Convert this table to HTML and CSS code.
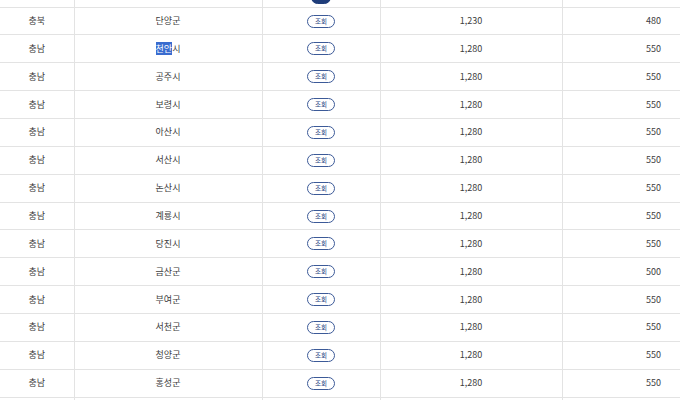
FILE: index.html
```html
<!DOCTYPE html>
<html lang="ko">
<head>
    <meta charset="UTF-8">
    <title>지역별 요금</title>
    <link rel="stylesheet" href="styles.css">
</head>
<body>
<div class="wrap">
    <table class="list">
        <colgroup>
            <col class="c1"><col class="c2"><col class="c3"><col class="c4"><col class="c5">
        </colgroup>
        <tbody>
        <tr class="prev">
            <td></td><td></td><td class="bt"><span class="btn on"></span></td><td></td><td class="r"></td>
        </tr>
        <tr><td>충북</td><td>단양군</td><td><span class="btn">조회</span></td><td>1,230</td><td class="r">480</td></tr>
        <tr><td>충남</td><td><span class="sel">천안</span>시</td><td><span class="btn">조회</span></td><td>1,280</td><td class="r">550</td></tr>
        <tr><td>충남</td><td>공주시</td><td><span class="btn">조회</span></td><td>1,280</td><td class="r">550</td></tr>
        <tr><td>충남</td><td>보령시</td><td><span class="btn">조회</span></td><td>1,280</td><td class="r">550</td></tr>
        <tr><td>충남</td><td>아산시</td><td><span class="btn">조회</span></td><td>1,280</td><td class="r">550</td></tr>
        <tr><td>충남</td><td>서산시</td><td><span class="btn">조회</span></td><td>1,280</td><td class="r">550</td></tr>
        <tr><td>충남</td><td>논산시</td><td><span class="btn">조회</span></td><td>1,280</td><td class="r">550</td></tr>
        <tr><td>충남</td><td>계룡시</td><td><span class="btn">조회</span></td><td>1,280</td><td class="r">550</td></tr>
        <tr><td>충남</td><td>당진시</td><td><span class="btn">조회</span></td><td>1,280</td><td class="r">550</td></tr>
        <tr><td>충남</td><td>금산군</td><td><span class="btn">조회</span></td><td>1,280</td><td class="r">500</td></tr>
        <tr><td>충남</td><td>부여군</td><td><span class="btn">조회</span></td><td>1,280</td><td class="r">550</td></tr>
        <tr><td>충남</td><td>서천군</td><td><span class="btn">조회</span></td><td>1,280</td><td class="r">550</td></tr>
        <tr><td>충남</td><td>청양군</td><td><span class="btn">조회</span></td><td>1,280</td><td class="r">550</td></tr>
        <tr><td>충남</td><td>홍성군</td><td><span class="btn">조회</span></td><td>1,280</td><td class="r">550</td></tr>
        <tr class="next"><td></td><td></td><td></td><td></td><td class="r"></td></tr>
        </tbody>
    </table>
</div>
</body>
</html>
```

FILE: styles.css
```css
* {
    padding: 0;
    margin: 0;
    box-sizing: border-box;
}

body {
    background: #fff;
    font-family: "Noto Sans CJK KR", "Noto Sans", sans-serif;
    color: #3d3d3d;
    overflow: hidden;
}

.wrap {
    width: 680px;
    margin-top: -20.8px;
}

.list {
    width: 680px;
    border-collapse: collapse;
    table-layout: fixed;
}

.list .c1 { width: 74px; }
.list .c2 { width: 188px; }
.list .c3 { width: 118px; }
.list .c4 { width: 182px; }
.list .c5 { width: 118px; }

.list td {
    height: 27.87px;
    border: 1px solid #e3e3e3;
    border-top: 0;
    text-align: center;
    vertical-align: middle;
    font-size: 9px;
    line-height: 12px;
    white-space: nowrap;
}

.list tr td:first-child {
    border-left: 0;
}

.list td.r {
    text-align: right;
    padding-right: 19px;
    border-right: 0;
}

.list td.bt {
    vertical-align: bottom;
    padding-bottom: 3px;
}

.btn {
    display: inline-block;
    width: 28px;
    height: 13px;
    border: 1px solid #3c5a98;
    border-radius: 7px;
    color: #2c4a86;
    font-size: 6.5px;
    line-height: 11px;
    text-align: center;
    vertical-align: middle;
}

.btn.on {
    width: 20px;
    background: #1f3d7a;
    border-color: #1f3d7a;
}

.sel {
    background: #3a6ccf;
    color: #fff;
}
```
